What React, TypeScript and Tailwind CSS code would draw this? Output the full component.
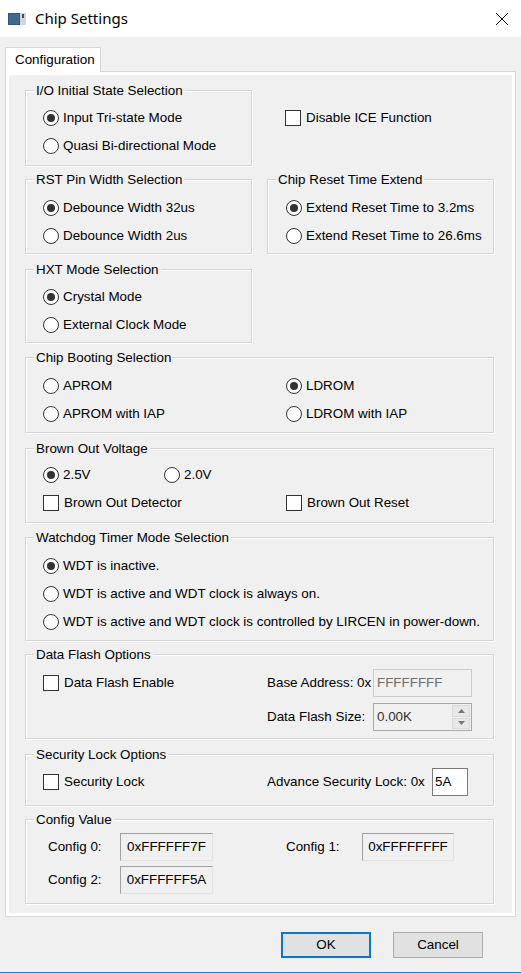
import React, { ReactNode } from 'react';

function Radio({ label, checked = false }: { label: string; checked?: boolean }) {
  return (
    <div className="flex items-center h-[28px] whitespace-nowrap">
      <span className="w-[16px] h-[16px] shrink-0 rounded-full border border-[#333333] bg-white flex items-center justify-center">
        {checked && <span className="w-[8px] h-[8px] rounded-full bg-[#333333]" />}
      </span>
      <span className="ml-[4px]">{label}</span>
    </div>
  );
}

function Check({ label }: { label: string }) {
  return (
    <div className="flex items-center h-[28px] whitespace-nowrap">
      <span className="w-[16px] h-[16px] shrink-0 border border-[#333333] bg-white" />
      <span className="ml-[5px]">{label}</span>
    </div>
  );
}

interface GroupProps {
  title: string;
  className?: string;
  children?: ReactNode;
}

function Group({ title, className = '', children }: GroupProps) {
  return (
    <div className={`relative border border-[#d5d5d5] shadow-[inset_1px_1px_0_#fff,1px_1px_0_#fff] ${className}`}>
      <span className="absolute left-[8px] top-[-8px] px-[2px] bg-[#f0f0f0] leading-[15px] whitespace-nowrap">
        {title}
      </span>
      {children}
    </div>
  );
}

function ValueBox({ value, className = '' }: { value: string; className?: string }) {
  return (
    <div
      className={`h-[28px] flex items-center justify-center border border-[#a0a0a0] border-r-[#e3e3e3] border-b-[#e3e3e3] ${className}`}
    >
      {value}
    </div>
  );
}

export default function App() {
  return (
    <div className="w-[521px] h-[973px] bg-[#f0f0f0] border-b border-[#1883d7] flex flex-col font-['Liberation_Sans',Arial,sans-serif] text-[13.4px] text-black leading-none overflow-hidden">
      {/* title bar */}
      <div className="h-[37px] bg-white flex items-center pl-[8px] shrink-0">
        <svg width="18" height="12" viewBox="0 0 18 12">
          <rect x="0" y="0" width="18" height="12" fill="#cfd6dd" />
          <rect x="0" y="0" width="12" height="12" fill="#31577a" />
          <rect x="1" y="1" width="10" height="10" fill="#3d6a92" />
          <rect x="14" y="1" width="2" height="4" fill="#4a4a4a" />
        </svg>
        <span className="ml-[9px] font-['Noto_Sans',sans-serif] text-[15px] text-black">Chip Settings</span>
        <svg className="ml-auto mr-[12px]" width="14" height="14" viewBox="0 0 14 14">
          <path d="M1 1 L13 13 M13 1 L1 13" stroke="#111" strokeWidth="1" />
        </svg>
      </div>

      <div className="px-[5px] pt-[10px]">
        {/* tab */}
        <div className="relative z-10 w-[96px] h-[25px] -mb-px bg-white border border-[#d9d9d9] border-b-0 flex items-center pl-[9px]">
          Configuration
        </div>

        {/* tab page */}
        <div className="w-[511px] h-[846px] border border-[#d9d9d9] bg-white p-[3px]">
          <div className="h-full bg-[#f0f0f0] pl-[16px] pr-[18px] flex flex-col">
            <div className="flex gap-[15px] mt-[15px]">
              <Group title="I/O Initial State Selection" className="w-[227px] h-[76px] pt-[13px] pl-[17px]">
                <Radio label="Input Tri-state Mode" checked />
                <Radio label="Quasi Bi-directional Mode" />
              </Group>
              <div className="w-[227px] pt-[14px] pl-[18px]">
                <Check label="Disable ICE Function" />
              </div>
            </div>

            <div className="flex gap-[15px] mt-[13px]">
              <Group title="RST Pin Width Selection" className="w-[227px] h-[75px] pt-[14px] pl-[17px]">
                <Radio label="Debounce Width 32us" checked />
                <Radio label="Debounce Width 2us" />
              </Group>
              <Group title="Chip Reset Time Extend" className="w-[227px] h-[75px] pt-[14px] pl-[18px]">
                <Radio label="Extend Reset Time to 3.2ms" checked />
                <Radio label="Extend Reset Time to 26.6ms" />
              </Group>
            </div>

            <Group title="HXT Mode Selection" className="w-[227px] h-[74px] mt-[15px] pt-[13px] pl-[17px]">
              <Radio label="Crystal Mode" checked />
              <Radio label="External Clock Mode" />
            </Group>

            <Group title="Chip Booting Selection" className="h-[76px] mt-[14px] pt-[14px] pl-[17px] grid grid-cols-[243px_1fr] content-start">
              <Radio label="APROM" />
              <Radio label="LDROM" checked />
              <Radio label="APROM with IAP" />
              <Radio label="LDROM with IAP" />
            </Group>

            <Group title="Brown Out Voltage" className="h-[75px] mt-[15px] pt-[12px] pl-[17px] grid grid-cols-[121px_122px_1fr] content-start">
              <Radio label="2.5V" checked />
              <Radio label="2.0V" />
              <div />
              <div className="col-span-2">
                <Check label="Brown Out Detector" />
              </div>
              <Check label="Brown Out Reset" />
            </Group>

            <Group title="Watchdog Timer Mode Selection" className="h-[104px] mt-[14px] pt-[14px] pl-[17px]">
              <Radio label="WDT is inactive." checked />
              <Radio label="WDT is active and WDT clock is always on." />
              <Radio label="WDT is active and WDT clock is controlled by LIRCEN in power-down." />
            </Group>

            <Group title="Data Flash Options" className="h-[85px] mt-[13px] pl-[17px] flex">
              <div className="w-[224px] pt-[14px]">
                <Check label="Data Flash Enable" />
              </div>
              <div className="pt-[14px] flex flex-col gap-[6px]">
                <div className="flex items-center">
                  <span className="w-[106px] whitespace-nowrap">Base Address: 0x</span>
                  <div className="w-[99px] h-[28px] border border-[#cccccc] flex items-center pl-[3px] text-[#6d6d6d]">
                    FFFFFFFF
                  </div>
                </div>
                <div className="flex items-center">
                  <span className="w-[106px] whitespace-nowrap">Data Flash Size:</span>
                  <div className="w-[99px] h-[28px] border border-[#a8a8a8] flex items-center pl-[3px] text-[#333333]">
                    <span className="flex-1">0.00K</span>
                    <div className="w-[18px] h-full flex flex-col mr-[1px] py-px gap-px">
                      <div className="flex-1 bg-[#e8e8e8] border border-[#dadada] flex items-center justify-center">
                        <svg width="7" height="4" viewBox="0 0 7 4">
                          <path d="M0 4 L3.5 0 L7 4 Z" fill="#777" />
                        </svg>
                      </div>
                      <div className="flex-1 bg-[#e8e8e8] border border-[#dadada] flex items-center justify-center">
                        <svg width="7" height="4" viewBox="0 0 7 4">
                          <path d="M0 0 L3.5 4 L7 0 Z" fill="#777" />
                        </svg>
                      </div>
                    </div>
                  </div>
                </div>
              </div>
            </Group>

            <Group title="Security Lock Options" className="h-[52px] mt-[15px] pl-[17px] flex">
              <div className="w-[224px] pt-[13px]">
                <Check label="Security Lock" />
              </div>
              <div className="pt-[13px] flex items-start">
                <span className="h-[28px] flex items-center w-[165px] whitespace-nowrap">Advance Security Lock: 0x</span>
                <div className="w-[36px] h-[28px] bg-white border border-[#7a7a7a] flex items-center pl-[2px]">5A</div>
              </div>
            </Group>

            <Group title="Config Value" className="h-[85px] mt-[13px] pt-[13px] pl-[22px] grid grid-cols-[72px_166px_76px_1fr] grid-rows-[28px_28px] gap-y-[5px] items-center content-start">
              <span>Config 0:</span>
              <ValueBox value="0xFFFFFF7F" className="w-[93px]" />
              <span>Config 1:</span>
              <ValueBox value="0xFFFFFFFF" className="w-[92px]" />
              <span>Config 2:</span>
              <ValueBox value="0xFFFFFF5A" className="w-[93px]" />
            </Group>
          </div>
        </div>

        {/* buttons */}
        <div className="flex justify-end gap-[22px] pr-[33px] mt-[15px]">
          <button className="w-[90px] h-[26px] bg-[#e1e1e1] border-2 border-[#0078d7] flex items-center justify-center">
            OK
          </button>
          <button className="w-[90px] h-[26px] bg-[#e1e1e1] border border-[#adadad] flex items-center justify-center">
            Cancel
          </button>
        </div>
      </div>
    </div>
  );
}
